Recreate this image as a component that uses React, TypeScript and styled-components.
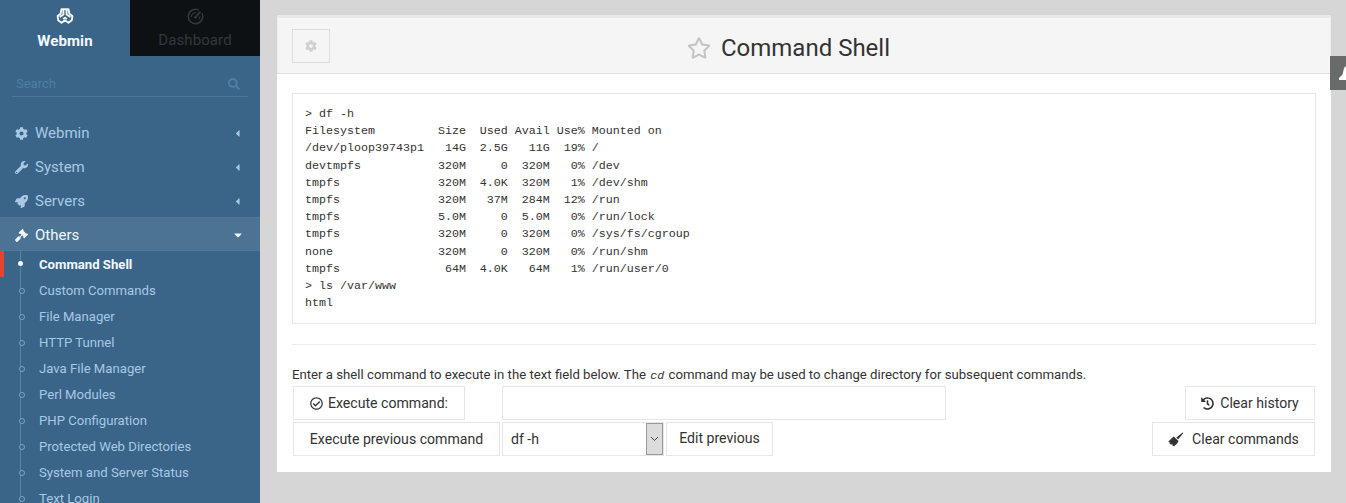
import React from "react";
import styled, { createGlobalStyle } from "styled-components";
import { FaCog, FaWrench, FaRocket, FaGavel, FaSearch, FaRegCheckCircle, FaHistory, FaRegStar, FaCaretLeft, FaCaretDown } from "react-icons/fa";

const Global = createGlobalStyle`
  html, body { margin: 0; padding: 0; height: 503px; overflow: hidden; background: #d6d6d6; }
  body { font-family: Roboto, "Liberation Sans", sans-serif; }
  * { box-sizing: border-box; }
`;

const Page = styled.div`
  display: flex;
  width: 1346px;
  height: 503px;
  overflow: hidden;
  position: relative;
`;

const Sidebar = styled.aside`
  width: 260px;
  flex: none;
  background: #3a6589;
  overflow: hidden;
`;

const Tabs = styled.div`
  display: flex;
  height: 56px;
`;

const Tab = styled.div<{ $active?: boolean }>`
  width: 130px;
  height: 56px;
  padding-top: 8px;
  display: flex;
  flex-direction: column;
  align-items: center;
  gap: ${(p) => (p.$active ? 7 : 6)}px;
  background: ${(p) => (p.$active ? "transparent" : "#0e1114")};
  color: ${(p) => (p.$active ? "#f4f8fb" : "#33383c")};
  font-size: 15px;
  line-height: 18px;
  font-weight: ${(p) => (p.$active ? 700 : 400)};
  letter-spacing: 0.1px;
`;

const SearchRow = styled.div`
  margin: 16px 12px 0 12px;
  height: 25px;
  padding: 0 8px 1px 4px;
  display: flex;
  align-items: center;
  justify-content: space-between;
  border-bottom: 1px solid #4a7699;
  color: #4f7ea3;
  font-size: 13px;
`;

const Nav = styled.nav`
  margin-top: 19px;
`;

const Item = styled.div<{ $open?: boolean }>`
  height: 34px;
  margin-top: ${(p) => (p.$open ? -1 : 0)}px;
  padding: ${(p) => (p.$open ? 2 : 0)}px ${(p) => (p.$open ? 16 : 17)}px 0 15px;
  display: flex;
  align-items: center;
  font-size: 15px;
  color: ${(p) => (p.$open ? "#f2f6f9" : "#a9c8e4")};
  background: ${(p) => (p.$open ? "#4b7394" : "transparent")};
  box-shadow: ${(p) => (p.$open ? "inset 0 1px 0 #50789a, inset 0 -1px 0 #50789a" : "none")};
  svg:first-child { width: 13px; margin-right: 7px; }
  svg { flex: none; }
  span { flex: 1; }
`;

const SubList = styled.div`
  position: relative;
  padding-bottom: 4px;
  &::before {
    content: "";
    position: absolute;
    left: 20px;
    top: 0;
    bottom: 0;
    width: 1px;
    background: #5a84a6;
  }
`;

const SubItem = styled.div<{ $active?: boolean }>`
  position: relative;
  height: 26px;
  padding-left: 39px;
  display: flex;
  align-items: center;
  font-size: 13.15px;
  font-weight: ${(p) => (p.$active ? 700 : 400)};
  color: ${(p) => (p.$active ? "#f4f8fb" : "#a9c8e4")};
  &::before {
    content: "";
    position: absolute;
    left: ${(p) => (p.$active ? 18 : 18.5)}px;
    top: ${(p) => (p.$active ? 10 : 11)}px;
    width: ${(p) => (p.$active ? 5 : 4)}px;
    height: ${(p) => (p.$active ? 5 : 4)}px;
    border-radius: 50%;
    background: ${(p) => (p.$active ? "#f4f8fb" : "#3a6589")};
    border: ${(p) => (p.$active ? "0" : "1px solid #7ea3c3")};
  }
  &::after {
    content: "";
    display: ${(p) => (p.$active ? "block" : "none")};
    position: absolute;
    left: 0;
    top: 0;
    width: 4px;
    height: 26px;
    background: #e8432e;
  }
`;

const Main = styled.main`
  flex: 1;
  padding: 15px 15px 0 17px;
`;

const Panel = styled.section`
  width: 1054px;
  height: 457px;
  background: #fff;
  border-top: 3px solid #e9e9e9;
`;

const PanelHead = styled.header`
  height: 56px;
  padding: 11px 15px 11px 14px;
  background: #f5f5f5;
  border-bottom: 1px solid #e0e0e0;
  border-left: 1px solid #ececec;
  border-right: 1px solid #ececec;
  display: flex;
  align-items: flex-start;
  position: relative;
`;

const CogButton = styled.div`
  width: 38px;
  height: 34px;
  border: 1px solid #dedede;
  display: flex;
  align-items: center;
  justify-content: center;
  color: #cfcfcf;
`;

const Title = styled.h1`
  position: absolute;
  left: 0;
  right: 0;
  top: 0;
  height: 56px;
  margin: 0;
  padding: 3px 31px 0 0;
  display: flex;
  align-items: center;
  justify-content: center;
  gap: 10px;
  font-size: 24px;
  font-weight: 400;
  color: #333;
  svg { color: #c4c4c4; }
`;

const Body = styled.div`
  padding: 19px 15px 0;
`;

const Terminal = styled.pre`
  margin: 0;
  height: 231px;
  padding: 12px 12px 10px;
  border: 1px solid #e8e8e8;
  font-family: "Liberation Mono", monospace;
  font-size: 11.67px;
  line-height: 17.2px;
  color: #333;
`;

const Rule = styled.hr`
  margin: 20px 0 21px;
  border: 0;
  border-top: 1px solid #eee;
`;

const Help = styled.p`
  margin: 0 0 1px;
  font-size: 13.2px;
  line-height: 18px;
  color: #333;
  code {
    font-family: "Liberation Mono", monospace;
    font-style: italic;
    font-size: 11.67px;
    margin: 0 1px;
  }
`;

const FormRow = styled.div`
  display: flex;
  height: 34px;
  margin-bottom: 2px;
  padding: 0 1px;
`;

const Btn = styled.div<{ $w: number; $lift?: boolean; $gap?: number }>`
  width: ${(p) => p.$w}px;
  height: 34px;
  flex: none;
  padding-bottom: ${(p) => (p.$lift ? 2 : 0)}px;
  border: 1px solid #e6e6e6;
  display: flex;
  align-items: center;
  justify-content: center;
  gap: ${(p) => p.$gap ?? 6}px;
  font-size: 14.1px;
  color: #333;
`;

const TextField = styled.div`
  width: 444px;
  height: 34px;
  margin-left: 37px;
  border: 1px solid #e6e6e6;
`;

const SelectBox = styled.div`
  width: 162px;
  height: 34px;
  margin: 0 2px;
  padding: 1px 1px 1px 8px;
  border: 1px solid #e6e6e6;
  display: flex;
  align-items: center;
  justify-content: space-between;
  font-size: 14.1px;
  color: #333;
`;

const SelectArrow = styled.div`
  width: 17px;
  height: 32px;
  margin-right: -1px;
  background: #dcdcdc;
  border: 1px solid #9a9a9a;
  display: flex;
  align-items: center;
  justify-content: center;
`;

const Spacer = styled.div`
  flex: 1;
`;

const SideTab = styled.div`
  position: absolute;
  left: 1330px;
  top: 56px;
  width: 16px;
  height: 34px;
  background: #676b69;
  display: flex;
  align-items: center;
  justify-content: flex-end;
`;

const WebminLogo = () => (
  <svg width="18" height="17" viewBox="0 0 18 17" fill="none" stroke="#f4f8fb" strokeWidth="1.9" strokeLinejoin="round">
    <path d="M5.5 1.2h7l.9 4.6 3 2.2-.6 4.2-3.3 2.6-3.5-2.4-3.5 2.4-3.3-2.6-.6-4.2 3-2.2z" />
    <path d="M7.4 1.5v5L3.6 9M10.6 1.5v5L14.4 9M7 11l2-1.2 2 1.2" />
  </svg>
);

const GaugeIcon = () => (
  <svg width="17" height="17" viewBox="0 0 17 17" fill="none" stroke="#33383c" strokeWidth="1.6">
    <path d="M11.8 2.1A7.2 7.2 0 1 0 15 5.4" />
    <path d="M8.5 9.2L13.5 3.6" strokeWidth="1.8" />
    <path d="M4.2 9a4.3 4.3 0 0 1 5-4.2M12.8 8.5a4.3 4.3 0 0 1-.6 2.4" strokeWidth="1.2" />
    <circle cx="8.5" cy="9.2" r="1.3" fill="#33383c" stroke="none" />
  </svg>
);

const BroomIcon = () => (
  <svg width="18" height="15" viewBox="0 0 18 15">
    <path d="M5.6 4.6l5 4.4-1.5 2.4-3 2.8-2-1 .6-1.4-1.6.9-1.8-1.4 1.3-1.1-1.6.2L0.4 9.6z" fill="#333" />
    <path d="M8.2 5.8L14.6.6l.6.7-4.9 5.9z" fill="#333" />
  </svg>
);

const PartialGlyph = () => (
  <svg width="7" height="14" viewBox="0 0 7 14">
    <path d="M7 0L5 2 3.6 8.5 0 12v2h7z" fill="#fff" />
  </svg>
);

const subs = ["Custom Commands", "File Manager", "HTTP Tunnel", "Java File Manager", "Perl Modules", "PHP Configuration", "Protected Web Directories", "System and Server Status", "Text Login"];

const output = `> df -h
Filesystem         Size  Used Avail Use% Mounted on
/dev/ploop39743p1   14G  2.5G   11G  19% /
devtmpfs           320M     0  320M   0% /dev
tmpfs              320M  4.0K  320M   1% /dev/shm
tmpfs              320M   37M  284M  12% /run
tmpfs              5.0M     0  5.0M   0% /run/lock
tmpfs              320M     0  320M   0% /sys/fs/cgroup
none               320M     0  320M   0% /run/shm
tmpfs               64M  4.0K   64M   1% /run/user/0
> ls /var/www
html`;

export default function App() {
  return (
    <Page>
      <Global />
      <Sidebar>
        <Tabs>
          <Tab $active><WebminLogo />Webmin</Tab>
          <Tab><GaugeIcon />Dashboard</Tab>
        </Tabs>
        <SearchRow>Search<FaSearch size={12} /></SearchRow>
        <Nav>
          <Item><FaCog size={13} /><span>Webmin</span><FaCaretLeft size={11} /></Item>
          <Item><FaWrench size={13} /><span>System</span><FaCaretLeft size={11} /></Item>
          <Item><FaRocket size={13} /><span>Servers</span><FaCaretLeft size={11} /></Item>
          <Item $open><FaGavel size={13} /><span>Others</span><FaCaretDown size={12} /></Item>
        </Nav>
        <SubList>
          <SubItem $active>Command Shell</SubItem>
          {subs.map((s) => <SubItem key={s}>{s}</SubItem>)}
        </SubList>
      </Sidebar>
      <Main>
        <Panel>
          <PanelHead>
            <CogButton><FaCog size={12} /></CogButton>
            <Title><FaRegStar size={24} />Command Shell</Title>
          </PanelHead>
          <Body>
            <Terminal>{output}</Terminal>
            <Rule />
            <Help>Enter a shell command to execute in the text field below. The <code>cd</code> command may be used to change directory for subsequent commands.</Help>
            <FormRow>
              <Btn $w={172} $gap={5}><FaRegCheckCircle size={13} />Execute command:</Btn>
              <TextField />
              <Spacer />
              <Btn $w={130}><FaHistory size={13} />Clear history</Btn>
            </FormRow>
            <FormRow>
              <Btn $w={207}>Execute previous command</Btn>
              <SelectBox>
                df -h
                <SelectArrow>
                  <svg width="9" height="6" viewBox="0 0 9 6" fill="none" stroke="#444" strokeWidth="1"><path d="M1 1l3.5 3.5L8 1" /></svg>
                </SelectArrow>
              </SelectBox>
              <Btn $w={107} $lift>Edit previous</Btn>
              <Spacer />
              <Btn $w={163}><BroomIcon />Clear commands</Btn>
            </FormRow>
          </Body>
        </Panel>
      </Main>
      <SideTab><PartialGlyph /></SideTab>
    </Page>
  );
}
